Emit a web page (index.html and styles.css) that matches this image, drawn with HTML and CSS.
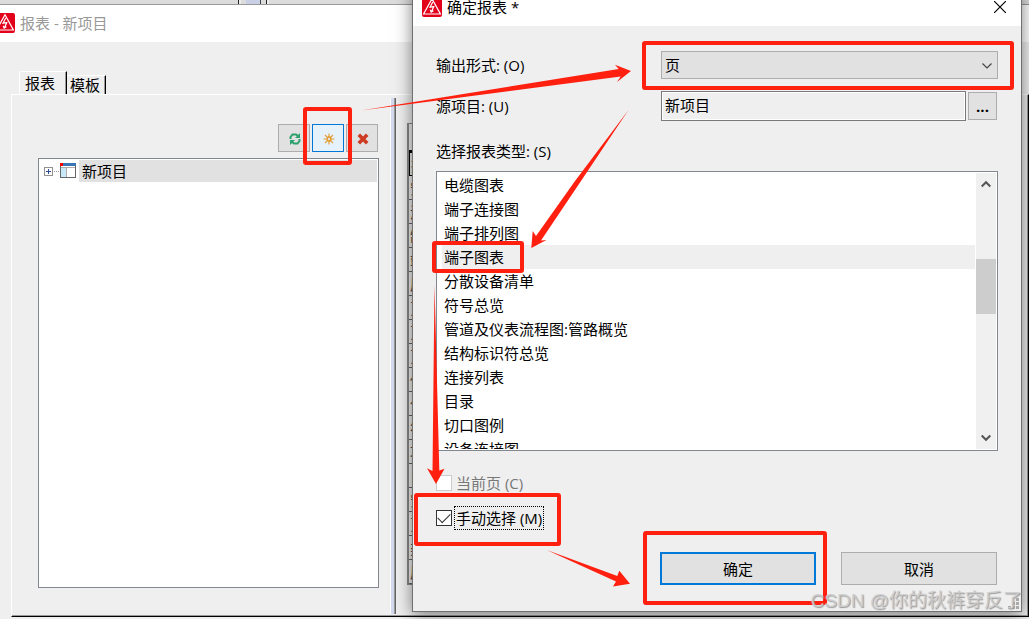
FILE: index.html
```
<!DOCTYPE html>
<html lang="zh-CN">

<head>
  <meta charset="utf-8">
  <title>确定报表</title>
  <link rel="stylesheet" href="styles.css">
</head>

<body>
  <svg class="defs" aria-hidden="true">
    <symbol id="logo" viewBox="0 0 20 20">
      <rect width="20" height="20" rx="2" fill="#e3001b" />
      <path d="M10 1.8 18.4 17H1.6Z" fill="none" stroke="#fff" stroke-width="1.2" />
      <path d="M10.8 5 8 10.2l3.8-.6L9.4 15M8.2 12.8l1 2.4 2.2-1.4" fill="none" stroke="#fff" stroke-width="1.2" />
    </symbol>
  </svg>

  <div class="desktop">
    <div class="strip">
      <span class="bar"></span>
      <span class="bar blue"></span>
      <span class="bar"></span>
    </div>

    <!-- 报表 window -->
    <div class="window report">
      <div class="titlebar inactive">
        <svg class="logo"><use href="#logo" /></svg>
        <span>报表 - 新项目</span>
      </div>
      <div class="report-body">
        <div class="tabs">
          <button class="tab active">报表</button>
          <button class="tab">模板</button>
        </div>
        <div class="panel">
          <div class="left">
            <div class="toolbar">
              <button class="tool" aria-label="刷新">
                <svg width="12" height="12" viewBox="0 0 12 12" fill="none" stroke="#2aa06c" stroke-width="2">
                  <path d="M1.500 6V4l2-2.500H7L9 3M10.500 6v2l-2 2.500H5L3 9" />
                  <path d="M6 5h5V0ZM6 7H1v5Z" fill="#2aa06c" stroke="none" />
                </svg>
              </button>
              <button class="tool current" aria-label="新建">
                <svg width="12" height="12" viewBox="0 0 12 12" fill="none" stroke="#e5a03c">
                  <path d="M6 .5v3M6 8.500v3M.5 6h3M8.500 6h3M2 2l2.200 2.200M7.800 7.800 10 10M10 2 7.800 4.200M4.200 7.800 2 10" stroke-width="1.200" />
                  <circle cx="6" cy="6" r="2" stroke-width="1.800" />
                </svg>
              </button>
              <button class="tool" aria-label="删除">
                <svg width="12" height="12" viewBox="0 0 12 12" stroke="#cc3b22" stroke-width="3.600">
                  <path d="M1.800 1.800l8.400 8.400M10.200 1.800l-8.400 8.400" />
                </svg>
              </button>
            </div>
            <div class="tree">
              <div class="node">
                <svg width="32" height="16" viewBox="0 0 32 16" shape-rendering="crispEdges">
                  <rect x=".5" y="4.500" width="8" height="8" fill="#fff" stroke="#919191" />
                  <path d="M2 8.500h5M4.500 6v5" stroke="#2b4c9b" />
                  <path d="M10 8.500h5" stroke="#999" stroke-dasharray="1 1" />
                  <rect x="16.500" y=".5" width="15" height="14" fill="#fff" stroke="#666" />
                  <rect x="17" y="5" width="5" height="9" fill="#c9e9fb" />
                  <path d="M17 4.500h14M22.500 5v9" stroke="#b5aaaa" />
                  <rect x="16" width="16" height="3" fill="#3a76b5" />
                  <rect x="16" width="3" height="3" fill="#f00" />
                </svg>
                <span class="node-text">新项目</span>
              </div>
            </div>
          </div>
          <div class="splitter"></div>
          <div class="grid">
            <div class="grid-head"></div>
            <div class="grid-row selected">报</div>
            <div class="grid-row">安</div>
            <div class="grid-row">源</div>
            <div class="grid-row">制</div>
            <div class="grid-row">端</div>
            <div class="grid-row">层</div>
            <div class="grid-row">页</div>
            <div class="grid-row">页</div>
            <div class="grid-row">页</div>
            <div class="grid-row">他</div>
            <div class="grid-row">作</div>
            <div class="grid-row">符</div>
            <div class="grid-row">项</div>
            <div class="grid-row">目</div>
            <div class="grid-row">安</div>
            <div class="grid-row">页</div>
            <div class="grid-row">类</div>
            <div class="grid-row">层</div>
          </div>
        </div>
      </div>
    </div>

    <!-- 确定报表 dialog -->
    <form class="window dialog">
      <div class="titlebar">
        <svg class="logo"><use href="#logo" /></svg>
        <span>确定报表 *</span>
        <button type="button" class="close" aria-label="关闭">
          <svg width="12" height="12" viewBox="0 0 12 12" stroke="#000" stroke-width="1.200">
            <path d="M0 0l12 12M12 0 0 12" />
          </svg>
        </button>
      </div>
      <div class="dialog-body">
        <div class="field">
          <label for="output">输出形式: (O)</label>
          <div class="select-wrap">
            <select id="output">
              <option>页</option>
            </select>
            <svg class="chevron" width="10" height="6" viewBox="0 0 10 6" fill="none" stroke="#444" stroke-width="1.200">
              <path d="M.5.5 5 5 9.500.5" />
            </svg>
          </div>
        </div>
        <div class="field source">
          <label for="source">源项目: (U)</label>
          <div class="source-wrap">
            <input type="text" id="source" value="新项目" readonly>
            <button type="button" class="btn more">...</button>
          </div>
        </div>
        <div class="list-label" id="typeLabel">选择报表类型: (S)</div>
        <div class="listbox">
          <ul class="items" role="listbox" aria-labelledby="typeLabel">
            <li role="option">电缆图表</li>
            <li role="option">端子连接图</li>
            <li role="option">端子排列图</li>
            <li role="option" class="selected" aria-selected="true">端子图表</li>
            <li role="option">分散设备清单</li>
            <li role="option">符号总览</li>
            <li role="option">管道及仪表流程图:管路概览</li>
            <li role="option">结构标识符总览</li>
            <li role="option">连接列表</li>
            <li role="option">目录</li>
            <li role="option">切口图例</li>
            <li role="option">设备连接图</li>
          </ul>
          <div class="scrollbar">
            <svg width="10" height="8" viewBox="0 0 10 8" fill="none" stroke="#555" stroke-width="2">
              <path d="M.7 6.500 5 2.200l4.300 4.300" />
            </svg>
            <div class="track">
              <div class="thumb"></div>
            </div>
            <svg width="10" height="8" viewBox="0 0 10 8" fill="none" stroke="#555" stroke-width="2">
              <path d="M.7 1.500 5 5.800l4.300-4.300" />
            </svg>
          </div>
        </div>
        <div class="checks">
          <div class="check">
            <input type="checkbox" id="current" disabled>
            <label for="current">当前页 (C)</label>
          </div>
          <div class="check focus">
            <input type="checkbox" id="manual" checked>
            <label for="manual">手动选择 (M)</label>
          </div>
        </div>
        <div class="buttons">
          <button type="button" class="btn primary">确定</button>
          <button type="button" class="btn">取消</button>
        </div>
      </div>
      <svg class="grip" width="11" height="11" viewBox="0 0 11 11" fill="#aaa">
        <path d="M8 0h3v3H8zM4 4h3v3H4zM8 4h3v3H8zM0 8h3v3H0zM4 8h3v3H4zM8 8h3v3H8z" />
      </svg>
    </form>

    <!-- red marks over the windows -->
    <svg class="marks" width="1029" height="619" viewBox="0 0 1029 619" aria-hidden="true">
      <g fill="none" stroke="#ff2010" stroke-width="4">
        <rect x="305" y="109" width="45" height="54" rx="1" />
        <rect x="644" y="43" width="368" height="45" rx="1" />
        <rect x="434" y="243" width="88" height="28" rx="1" />
        <rect x="416" y="495" width="143" height="49" rx="1" />
        <rect x="645" y="533" width="180" height="70" rx="1" />
      </g>
      <g fill="#ff2010">
        <path d="M361 110.500 618.700 69 615 64.700 631 71 617 82 620.700 76.500Z" />
        <path d="M628.500 110 575 181 536 236 532.700 231 531.300 248 546.500 240 541 240.500 579 184Z" />
        <path d="M434.500 285 432.500 471 427 468.300 436 484 444.500 468.700 439.300 470.500Z" />
        <path d="M546.700 550 617.300 576 619.300 570.700 630 583.700 613 586.500 616 581.500Z" />
      </g>
    </svg>

    <div class="watermark">CSDN @你的秋裤穿反了</div>
  </div>
</body>

</html>
```
FILE: styles.css
```
* {
  box-sizing: border-box;
}

body {
  margin: 0;
  font-family: "Open Sans", "Noto Sans CJK SC", sans-serif;
  font-size: 15px;
  line-height: 24px;
  color: #000;
}

button,
input,
select {
  margin: 0;
  font: inherit;
  color: inherit;
  border-radius: 0;
}

.defs {
  position: absolute;
  width: 0;
  height: 0;
}

.desktop {
  position: relative;
  height: 100vh;
  overflow: hidden;
  background: #dcdcdc;
}

.strip {
  display: flex;
  gap: 5px;
  height: 4px;
  padding-left: 238px;
}

.bar {
  width: 3px;
  background: #222;
  border-right: 2px solid #eee;
}

.bar.blue {
  width: 15px;
  background: #c9cfe4;
  border-right: 1px solid #444;
}

/* windows */
.window {
  position: absolute;
  display: flex;
  flex-direction: column;
  background: #efefef;
}

.titlebar {
  display: flex;
  align-items: center;
  gap: 5px;
  height: 38px;
  padding: 0 15px 0 9px;
  background: #fff;
}

.logo {
  width: 20px;
  height: 20px;
}

.report {
  top: 4px;
  left: 0;
  right: 0;
  bottom: 0;
}

.inactive {
  padding: 0 0 2px;
  color: #999;
  border-top: 1px solid #999;
}

.inactive .logo {
  margin-left: -5px;
}

.report-body {
  flex: 1;
  display: flex;
  flex-direction: column;
  padding: 29px 0 2px 11px;
}

.tabs {
  display: flex;
  align-items: flex-end;
  height: 24px;
  margin: 0 0 -1px 8px;
}

.tab {
  height: 20px;
  padding: 0 5px 2px 3px;
  line-height: 16px;
  background: #efefef;
  border: 0;
  border-top: 1px solid #fff;
  border-right: 1px solid #000;
  box-shadow: inset -1px 0 #999;
}

.tab.active {
  height: 24px;
  padding: 0 11px 2px 5px;
  border-left: 1px solid #fff;
  border-radius: 2px 0 0 0;
}

.panel {
  flex: 1;
  display: flex;
  border: 1px solid #fff;
  border-right-color: #000;
  border-bottom-color: #000;
  box-shadow: inset -1px -1px #999;
}

.left {
  flex: 0 0 367px;
  display: flex;
  flex-direction: column;
  gap: 6px;
  padding: 29px 0 28px 26px;
}

.toolbar {
  display: flex;
  justify-content: flex-end;
  gap: 2px;
  padding-right: 1px;
}

.tool {
  display: flex;
  align-items: center;
  justify-content: center;
  width: 32px;
  height: 28px;
  padding: 1px 0 0 1px;
  background: #e1e1e1;
  border: 1px solid #adadad;
}

.tool.current {
  background: #e5f1fb;
  border-color: #0078d7;
}

.tree {
  flex: 1;
  padding: 1px;
  background: #fff;
  border: 1px solid #828790;
}

.node {
  display: flex;
  align-items: center;
  gap: 3px;
  padding-left: 4px;
}

.node-text {
  flex: 1;
  padding-left: 3px;
  line-height: 22px;
  background: #e1e1e1;
}

.splitter {
  width: 6px;
  margin: 3px 11px 2px;
  background: #d3d9ee;
  border-left: 1px solid #fff;
  border-right: 1px solid #666;
  box-shadow: inset -1px 0 #999;
}

.grid {
  flex: 1;
  align-self: flex-start;
  margin: 28px 16px 0 0;
  border: 1px solid #888;
  border-left-width: 2px;
}

.grid-head {
  height: 28px;
  border-bottom: 2px solid #000;
}

.grid-row {
  height: 24px;
  padding-left: 1px;
  color: #543;
  border-bottom: 1px solid #666;
}

.grid-row.selected {
  border: 1px solid #000;
}

/* dialog */
.dialog {
  top: -12px;
  left: 412px;
  right: 7px;
  border: 1px solid #707070;
  border-top: 0;
  box-shadow: 0 3px 16px rgba(0, 0, 0, 0.5);
}

.close {
  display: flex;
  margin-left: auto;
  padding: 0;
  background: none;
  border: 0;
}

.dialog-body {
  padding: 25px 23px 26px;
}

.grip {
  position: absolute;
  right: 2px;
  bottom: 2px;
}

.field {
  display: grid;
  grid-template-columns: 225px 1fr;
  align-items: center;
}

.field.source {
  margin-top: 12px;
}

.select-wrap {
  position: relative;
  height: 28px;
}

select {
  display: block;
  width: 100%;
  height: 28px;
  padding: 0 3px;
  appearance: none;
  background: #e1e1e1;
  border: 1px solid #adadad;
}

.chevron {
  position: absolute;
  top: 12px;
  right: 6px;
}

.source-wrap {
  display: flex;
  align-items: center;
  gap: 2px;
  padding-right: 1px;
}

.source-wrap input {
  flex: 1;
  min-width: 0;
  height: 30px;
  padding: 0 3px 4px;
  background: #efefef;
  border: 1px solid #7a7a7a;
  box-shadow: inset 0 0 0 1px #fff;
}

.btn {
  width: 156px;
  height: 33px;
  padding: 0;
  background: #e1e1e1;
  border: 1px solid #adadad;
}

.btn.primary {
  border: 2px solid #0078d7;
}

.btn.more {
  width: 29px;
  height: 28px;
  font-weight: bold;
}

.list-label {
  margin: 18px 0 8px;
}

.listbox {
  display: flex;
  height: 280px;
  padding: 1px;
  background: #fff;
  border: 1px solid #828790;
}

.items {
  flex: 1;
  margin: 0;
  padding: 0 1px 0 4px;
  overflow: hidden;
  list-style: none;
}

.items li {
  height: 24px;
  padding-left: 2px;
}

.items .selected {
  background: #efefef;
}

.scrollbar {
  display: flex;
  flex-direction: column;
  align-items: center;
  width: 20px;
  padding: 7px 0;
  background: #f0f0f0;
}

.track {
  flex: 1;
  width: 100%;
  padding-top: 71px;
}

.thumb {
  height: 55px;
  background: #cdcdcd;
}

.checks {
  display: grid;
  gap: 11px;
  margin-top: 20px;
}

.check {
  display: flex;
  align-items: center;
  gap: 3px;
  height: 24px;
}

.check input {
  display: grid;
  place-items: center;
  width: 16px;
  height: 16px;
  appearance: none;
  background: #fff;
  border: 1px solid #333;
}

.check input:checked::before {
  content: "";
  width: 11px;
  height: 6px;
  margin-bottom: 3px;
  border: solid #333;
  border-width: 0 0 1px 1px;
  transform: rotate(-45deg);
}

.check input:disabled {
  border-color: #ccc;
}

.check input:disabled + label {
  color: #777;
}

.check label {
  padding: 0 1px;
}

.check.focus label {
  line-height: 22px;
  outline: 1px dotted #000;
}

.buttons {
  display: flex;
  justify-content: flex-end;
  gap: 25px;
  margin-top: 22px;
  padding-right: 1px;
}

/* overlay */
.marks {
  position: absolute;
  top: 0;
  left: 0;
}

.watermark {
  position: absolute;
  right: 7px;
  bottom: 4px;
  font-family: "Liberation Sans", "Noto Sans CJK SC", sans-serif;
  font-size: 19px;
  line-height: 28px;
  color: rgba(205, 205, 205, 0.9);
  text-shadow: 1px 1px 1px #999;
}
```
